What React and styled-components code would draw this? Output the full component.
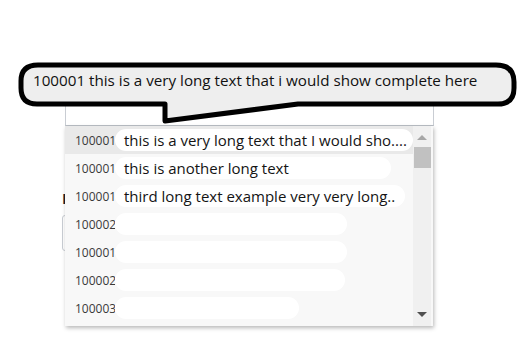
import styled, { createGlobalStyle } from "styled-components";

const GlobalStyle = createGlobalStyle`
  html, body {
    margin: 0;
    background: #ffffff;
  }
  body {
    font-family: "Open Sans", "Noto Sans", sans-serif;
  }
`;

const Page = styled.div`
  position: relative;
  width: 524px;
  height: 352px;
  overflow: hidden;
`;

const Form = styled.div`
  display: flex;
  flex-direction: column;
  padding: 90px 0 0 62px;
`;

const SelectWrap = styled.div`
  position: relative;
  margin-left: 3px;
  width: 369px;
`;

const SelectBox = styled.div`
  height: 36px;
  box-sizing: border-box;
  border: 1px solid #c9cdd3;
  border-bottom-color: #b9bec5;
  background: #fff;
`;

const Menu = styled.ul`
  position: absolute;
  top: 36px;
  left: 0;
  width: 368px;
  height: 200px;
  margin: 0;
  padding: 0 20px 0 0;
  box-sizing: border-box;
  list-style: none;
  background: #f8f8f8;
  box-shadow: 1px 2px 4px rgba(0, 0, 0, 0.28);
  z-index: 2;
`;

const Option = styled.li`
  display: flex;
  align-items: center;
  height: 28px;
  padding-left: 10px;
  background: ${(p) => (p.$active ? "#e9e9e9" : "transparent")};
`;

const Code = styled.span`
  font-family: "Open Sans", sans-serif;
  font-size: 12px;
  color: #3a3a3a;
  width: 40px;
  overflow: hidden;
  white-space: nowrap;
`;

const Smudge = styled.span`
  display: flex;
  align-items: center;
  height: 22px;
  width: ${(p) => p.$w}px;
  padding-left: 9px;
  box-sizing: border-box;
  background: #ffffff;
  border-radius: 11px;
  font-size: 15px;
  color: #141414;
  white-space: nowrap;
  overflow: hidden;
`;

const Scrollbar = styled.div`
  position: absolute;
  top: 0;
  right: 2px;
  width: 18px;
  height: 100%;
  background: #f0f0f0;
  display: flex;
  flex-direction: column;
  align-items: center;
`;

const Arrow = styled.div`
  width: 0;
  height: 0;
  border-left: 5px solid transparent;
  border-right: 5px solid transparent;
  ${(p) =>
    p.$up
      ? "border-bottom: 5px solid #a6a6a6; margin-top: 9px;"
      : "border-top: 5px solid #505050; margin-top: auto; margin-bottom: 9px;"}
`;

const Thumb = styled.div`
  width: 17px;
  height: 21px;
  margin-top: 7px;
  background: #c1c1c1;
`;

const SecondLabel = styled.div`
  margin-top: 65px;
  height: 15px;
  font-family: "Open Sans", sans-serif;
  font-weight: 700;
  font-size: 15px;
  line-height: 15px;
  color: #1a2230;
`;

const TextInput = styled.div`
  margin-top: 9px;
  width: 360px;
  height: 36px;
  box-sizing: border-box;
  border: 1px solid #c9cdd3;
  border-radius: 3px;
  background: #fff;
`;

const Bubble = styled.div`
  position: absolute;
  left: 0;
  top: 0;
  width: 524px;
  height: 130px;
  pointer-events: none;
  z-index: 5;
`;

const BubbleText = styled.div`
  position: absolute;
  left: 33px;
  top: 70px;
  font-size: 15.2px;
  line-height: 20px;
  color: #111;
  white-space: nowrap;
`;

const options = [
  { code: "100001", text: "this is a very long text that I would sho....", w: 298, active: true },
  { code: "100001", text: "this is another long text", w: 276 },
  { code: "100001", text: "third long text example very very long..", w: 290 },
  { code: "100002", text: "", w: 232 },
  { code: "100001", text: "", w: 232 },
  { code: "100002", text: "", w: 230 },
  { code: "100003", text: "", w: 184 },
];

export default function App() {
  return (
    <Page>
      <GlobalStyle />
      <Form>
        <SelectWrap>
          <SelectBox />
          <Menu>
            {options.map((o, i) => (
              <Option key={i} $active={o.active}>
                <Code>{o.code}</Code>
                <Smudge $w={o.w}>{o.text}</Smudge>
              </Option>
            ))}
            <Scrollbar>
              <Arrow $up />
              <Thumb />
              <Arrow />
            </Scrollbar>
          </Menu>
        </SelectWrap>
        <SecondLabel>E</SecondLabel>
        <TextInput />
      </Form>
      <Bubble>
        <svg width="524" height="130" viewBox="0 0 524 130">
          <path
            d="M38 65 L496 65 Q514 65 514 82 L514 88 Q514 104 498 104 L298 104 L165 121 L165 104 L37 104 Q21 104 21 88 L21 81 Q21 65 38 65 Z"
            fill="#eeeeee"
            stroke="#000"
            strokeWidth="5"
            strokeLinejoin="round"
          />
        </svg>
        <BubbleText>100001 this is a very long text that i would show complete here</BubbleText>
      </Bubble>
    </Page>
  );
}
